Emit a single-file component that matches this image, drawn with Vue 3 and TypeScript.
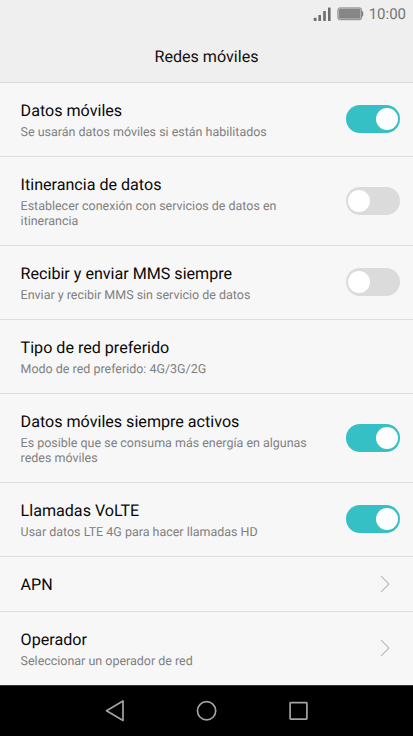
<script setup lang="ts">
interface Setting {
  title: string
  lines: string[]
  kind: 'toggle' | 'link' | 'plain'
  on?: boolean
}

const settings: Setting[] = [
  { title: 'Datos móviles', lines: ['Se usarán datos móviles si están habilitados'], kind: 'toggle', on: true },
  { title: 'Itinerancia de datos', lines: ['Establecer conexión con servicios de datos en', 'itinerancia'], kind: 'toggle', on: false },
  { title: 'Recibir y enviar MMS siempre', lines: ['Enviar y recibir MMS sin servicio de datos'], kind: 'toggle', on: false },
  { title: 'Tipo de red preferido', lines: ['Modo de red preferido: 4G/3G/2G'], kind: 'plain' },
  { title: 'Datos móviles siempre activos', lines: ['Es posible que se consuma más energía en algunas', 'redes móviles'], kind: 'toggle', on: true },
  { title: 'Llamadas VoLTE', lines: ['Usar datos LTE 4G para hacer llamadas HD'], kind: 'toggle', on: true },
  { title: 'APN', lines: [], kind: 'link' },
  { title: 'Operador', lines: ['Seleccionar un operador de red'], kind: 'link' },
]
</script>

<template>
  <div class="screen">
    <div class="status">
      <svg class="signal" width="18" height="15" viewBox="0 0 18 15">
        <g fill="#6d6d6d">
          <rect x="0.7" y="10.8" width="2.9" height="3.2" rx="0.8" />
          <rect x="5.4" y="7.9" width="2.6" height="6.1" rx="0.5" />
          <rect x="10.2" y="4" width="2.6" height="10" rx="0.5" />
          <rect x="15" y="0.6" width="2.6" height="13.4" rx="0.5" />
        </g>
      </svg>
      <svg class="battery" width="27" height="14" viewBox="0 0 27 14">
        <rect x="0.9" y="0.9" width="23.6" height="11.8" rx="1.8" fill="#c4c4c4" stroke="#8b8b8b" stroke-width="1" />
        <rect x="2.1" y="2.1" width="21.2" height="9.4" rx="0.6" fill="#868686" />
        <rect x="24.7" y="4.2" width="1.5" height="5.2" rx="0.6" fill="#858585" />
      </svg>
      <span class="clock">10:00</span>
    </div>
    <header class="header">Redes móviles</header>
    <main class="list">
      <section v-for="item in settings" :key="item.title" class="row" :class="{ tall: item.lines.length === 2, short: item.lines.length === 0 }">
        <div class="text">
          <div class="title">{{ item.title }}</div>
          <div v-if="item.lines.length" class="summary">
            <div v-for="line in item.lines" :key="line">{{ line }}</div>
          </div>
        </div>
        <div v-if="item.kind === 'toggle'" class="toggle" :class="{ on: item.on }"><span class="knob"></span></div>
        <svg v-else-if="item.kind === 'link'" class="chevron" width="10" height="18" viewBox="0 0 10 18">
          <path d="M1 1 L9 9 L1 17" fill="none" stroke="#bdbdbd" stroke-width="1.1" />
        </svg>
      </section>
    </main>
    <nav class="nav">
      <svg width="20" height="24" viewBox="0 0 20 24"><path d="M1.5 11.7 L18 2 V21.4 Z" fill="none" stroke="#a3a3a3" stroke-width="1.7" stroke-linejoin="round" /></svg>
      <svg width="22" height="22" viewBox="0 0 22 22"><circle cx="10.6" cy="10.8" r="9.1" fill="none" stroke="#a3a3a3" stroke-width="1.7" /></svg>
      <svg width="20" height="20" viewBox="0 0 20 20"><rect x="1.1" y="1.6" width="16.8" height="16.6" rx="0.6" fill="none" stroke="#a3a3a3" stroke-width="1.7" /></svg>
    </nav>
  </div>
</template>

<style>
body {
  margin: 0;
  background: #f7f7f7;
}
</style>

<style scoped>
.screen {
  width: 413px;
  height: 736px;
  display: flex;
  flex-direction: column;
  overflow: hidden;
  background: #f7f7f7;
  font-family: Roboto, "Liberation Sans", sans-serif;
  text-rendering: geometricPrecision;
}
.status {
  height: 28px;
  flex: none;
  box-sizing: border-box;
  padding-right: 7px;
  display: flex;
  align-items: center;
  justify-content: flex-end;
  background: #efefef;
}
.signal {
  margin-right: 6px;
}
.battery {
  margin-right: 5px;
}
.clock {
  font-size: 15px;
  line-height: 29px;
  color: #757575;
}
.header {
  height: 55px;
  flex: none;
  box-sizing: border-box;
  border-bottom: 1px solid #d8d8d8;
  background: #efefef;
  color: #111;
  font-size: 16.1px;
  line-height: 57px;
  text-align: center;
}
.list {
  height: 602px;
  flex: none;
  overflow: hidden;
}
.row {
  height: 74px;
  box-sizing: border-box;
  padding: 0 13px 0 20.6px;
  display: flex;
  align-items: center;
  justify-content: space-between;
  border-bottom: 1px solid #dedede;
}
.row.tall {
  height: 89px;
}
.row.short {
  height: 55px;
}
.row:last-child {
  border-bottom-color: transparent;
}
.text {
  align-self: flex-start;
  padding-top: 18px;
  white-space: nowrap;
}
.title {
  font-size: 16.1px;
  line-height: 20px;
  color: #080808;
}
.summary {
  margin-top: 5px;
  font-size: 12.47px;
  line-height: 14.5px;
  color: #808080;
}
.toggle {
  width: 54px;
  height: 28px;
  box-sizing: border-box;
  margin-bottom: 1px;
  padding: 3px 2px;
  display: flex;
  border-radius: 14px;
  background: #dbdbdb;
}
.toggle.on {
  justify-content: flex-end;
  background: #35c0c5;
}
.knob {
  width: 22px;
  height: 22px;
  border-radius: 50%;
  background: #fff;
}
.chevron {
  margin: 0 10px 1px 0;
}
.nav {
  height: 51px;
  flex: none;
  box-sizing: border-box;
  padding: 0 104px 0 105px;
  display: flex;
  align-items: center;
  justify-content: space-between;
  border-top: 1px solid #333;
  background: #000;
}
</style>
